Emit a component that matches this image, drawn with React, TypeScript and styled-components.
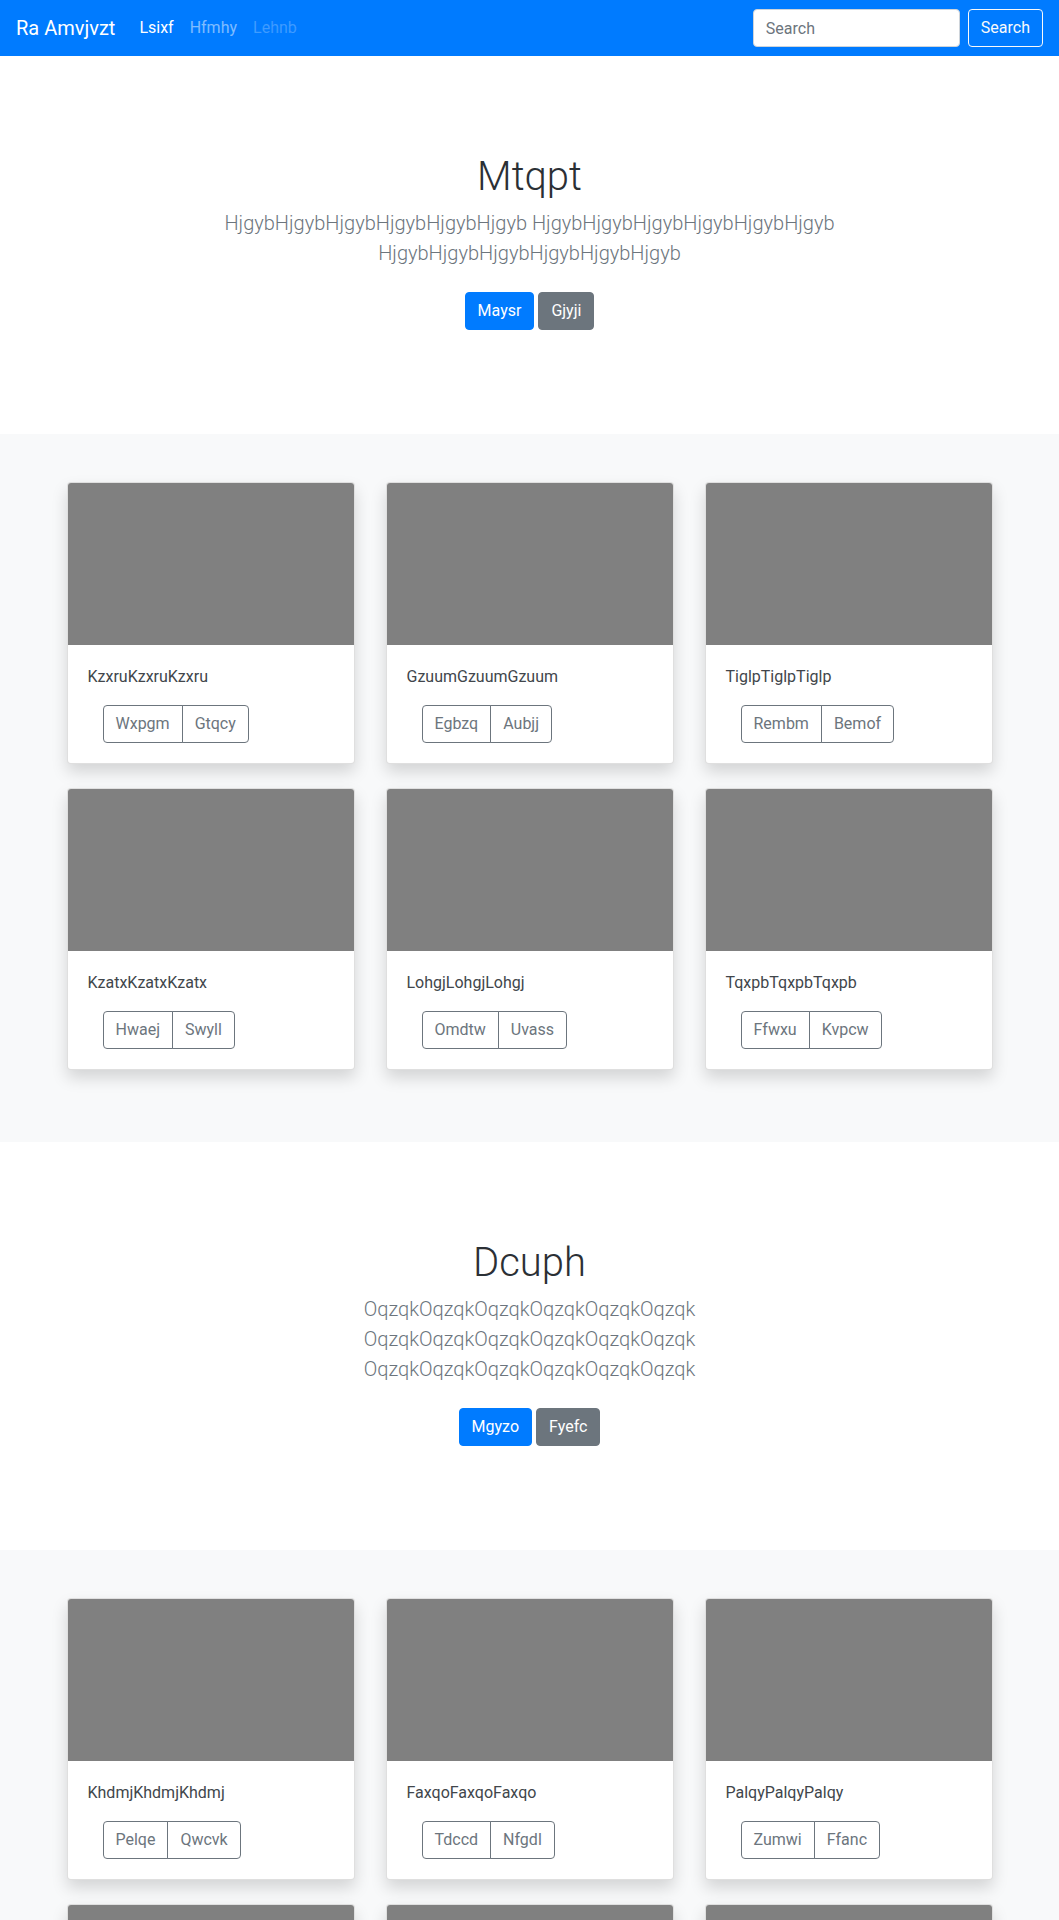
import React from 'react';
import styled, {createGlobalStyle} from 'styled-components';

const GlobalStyle = createGlobalStyle`
    body {
        margin: 0;
        font-family: "Segoe UI", Roboto, "Helvetica Neue", Arial, "Noto Sans", sans-serif;
        font-size: 16px;
        line-height: 1.5;
        color: #212529;
        background: #fff;
    }
    * {
        box-sizing: border-box;
    }
`;

const Navbar = styled.nav`
    display: flex;
    align-items: center;
    justify-content: space-between;
    height: 56px;
    padding: 8px 16px;
    background-color: #007bff;
`;

const NavLeft = styled.div`
    display: flex;
    align-items: center;
`;

const Brand = styled.a`
    margin-right: 16px;
    font-size: 20px;
    line-height: 30px;
    color: #fff;
    text-decoration: none;
`;

const NavList = styled.div`
    display: flex;
`;

type LinkState = 'active' | 'normal' | 'disabled';

const linkColors: Record<LinkState, string> = {
    active: '#fff',
    normal: 'rgba(255, 255, 255, 0.5)',
    disabled: 'rgba(255, 255, 255, 0.25)'
};

const NavLink = styled.a<{$state: LinkState}>`
    padding: 8px;
    color: ${p => linkColors[p.$state]};
    text-decoration: none;
`;

const SearchForm = styled.form`
    display: flex;
    align-items: center;
    gap: 8px;
`;

const SearchInput = styled.input`
    width: 207px;
    height: 38px;
    padding: 6px 12px;
    font: inherit;
    color: #495057;
    border: 1px solid #ced4da;
    border-radius: 4px;
    background: #fff;
    &::placeholder {
        color: #6c757d;
    }
`;

const OutlineLight = styled.button`
    height: 38px;
    padding: 6px 12px;
    font: inherit;
    color: #f8f9fa;
    background: transparent;
    border: 1px solid #f8f9fa;
    border-radius: 4px;
`;

const Hero = styled.section`
    padding: 96px 15px;
    text-align: center;
    background: #fff;
`;

const HeroInner = styled.div`
    max-width: 640px;
    margin: 0 auto;
`;

const HeroTitle = styled.h1`
    margin: 0 0 8px;
    padding-top: 2px;
    font-size: 40px;
    font-weight: 300;
    line-height: 46px;
    color: #2b3035;
`;

const Lead = styled.p`
    margin: 0 0 16px;
    font-size: 20px;
    font-weight: 300;
    line-height: 30px;
    color: #6c757d;
`;

const Actions = styled.div`
    display: flex;
    justify-content: center;
    gap: 4px;
    padding: 8px 0;
`;

const SolidButton = styled.a<{$tone: 'primary' | 'secondary'}>`
    display: inline-block;
    padding: 6px 12px;
    line-height: 24px;
    color: #fff;
    text-decoration: none;
    border-radius: 4px;
    background-color: ${p => (p.$tone === 'primary' ? '#007bff' : '#6c757d')};
    border: 1px solid ${p => (p.$tone === 'primary' ? '#007bff' : '#6c757d')};
`;

const Album = styled.section`
    padding: 48px 0 72px;
    background-color: #f8f9fa;
`;

const Grid = styled.div`
    display: grid;
    grid-template-columns: repeat(3, 288px);
    column-gap: 31px;
    row-gap: 24px;
    justify-content: center;
`;

const Card = styled.div`
    display: flex;
    flex-direction: column;
    background: #fff;
    border: 1px solid rgba(0, 0, 0, 0.125);
    border-radius: 4px;
    overflow: hidden;
    box-shadow: 0 8px 16px rgba(0, 0, 0, 0.15);
`;

const Thumb = styled.div`
    height: 162px;
    background-color: #808080;
`;

const CardBody = styled.div`
    padding: 20px;
`;

const CardText = styled.p`
    margin: 0 0 16px;
    color: #41464b;
`;

const BtnGroup = styled.div`
    display: inline-flex;
    margin-left: 15px;
`;

const GroupButton = styled.button`
    padding: 6px 12px;
    font: inherit;
    line-height: 24px;
    color: #6c757d;
    background: transparent;
    border: 1px solid #6c757d;
    &:first-child {
        border-radius: 4px 0 0 4px;
    }
    &:last-child {
        margin-left: -1px;
        border-radius: 0 4px 4px 0;
    }
`;

type CardData = {text: string; actions: [string, string]};

const HEROES = [
    {
        title: 'Mtqpt',
        lead: Array(3).fill('Hjgyb'.repeat(6)).join(' '),
        buttons: ['Maysr', 'Gjyji'],
        cards: [
            {text: 'Kzxru'.repeat(3), actions: ['Wxpgm', 'Gtqcy']},
            {text: 'Gzuum'.repeat(3), actions: ['Egbzq', 'Aubjj']},
            {text: 'Tiglp'.repeat(3), actions: ['Rembm', 'Bemof']},
            {text: 'Kzatx'.repeat(3), actions: ['Hwaej', 'Swyll']},
            {text: 'Lohgj'.repeat(3), actions: ['Omdtw', 'Uvass']},
            {text: 'Tqxpb'.repeat(3), actions: ['Ffwxu', 'Kvpcw']}
        ] as CardData[]
    },
    {
        title: 'Dcuph',
        lead: Array(3).fill('Oqzqk'.repeat(6)).join(' '),
        buttons: ['Mgyzo', 'Fyefc'],
        cards: [
            {text: 'Khdmj'.repeat(3), actions: ['Pelqe', 'Qwcvk']},
            {text: 'Faxqo'.repeat(3), actions: ['Tdccd', 'Nfgdl']},
            {text: 'Palqy'.repeat(3), actions: ['Zumwi', 'Ffanc']},
            {text: 'Vbnre'.repeat(3), actions: ['Jotwa', 'Ikscu']},
            {text: 'Wrmha'.repeat(3), actions: ['Dleop', 'Yugtr']},
            {text: 'Csnei'.repeat(3), actions: ['Hapvo', 'Qirbe']}
        ] as CardData[]
    }
];

const App = (): JSX.Element => {
    return (
        <>
            <GlobalStyle />
            <Navbar>
                <NavLeft>
                    <Brand href="#">Ra Amvjvzt</Brand>
                    <NavList>
                        <NavLink $state="active" href="#">Lsixf</NavLink>
                        <NavLink $state="normal" href="#">Hfmhy</NavLink>
                        <NavLink $state="disabled">Lehnb</NavLink>
                    </NavList>
                </NavLeft>
                <SearchForm onSubmit={e => e.preventDefault()}>
                    <SearchInput type="search" placeholder="Search" />
                    <OutlineLight type="submit">Search</OutlineLight>
                </SearchForm>
            </Navbar>

            {HEROES.map(h => (
                <React.Fragment key={h.title}>
                    <Hero>
                        <HeroInner>
                            <HeroTitle>{h.title}</HeroTitle>
                            <Lead>{h.lead}</Lead>
                            <Actions>
                                <SolidButton $tone="primary" href="#">{h.buttons[0]}</SolidButton>
                                <SolidButton $tone="secondary" href="#">{h.buttons[1]}</SolidButton>
                            </Actions>
                        </HeroInner>
                    </Hero>
                    <Album>
                        <Grid>
                            {h.cards.map(c => (
                                <Card key={c.text}>
                                    <Thumb />
                                    <CardBody>
                                        <CardText>{c.text}</CardText>
                                        <BtnGroup>
                                            <GroupButton type="button">{c.actions[0]}</GroupButton>
                                            <GroupButton type="button">{c.actions[1]}</GroupButton>
                                        </BtnGroup>
                                    </CardBody>
                                </Card>
                            ))}
                        </Grid>
                    </Album>
                </React.Fragment>
            ))}
        </>
    );
};

export default App;
